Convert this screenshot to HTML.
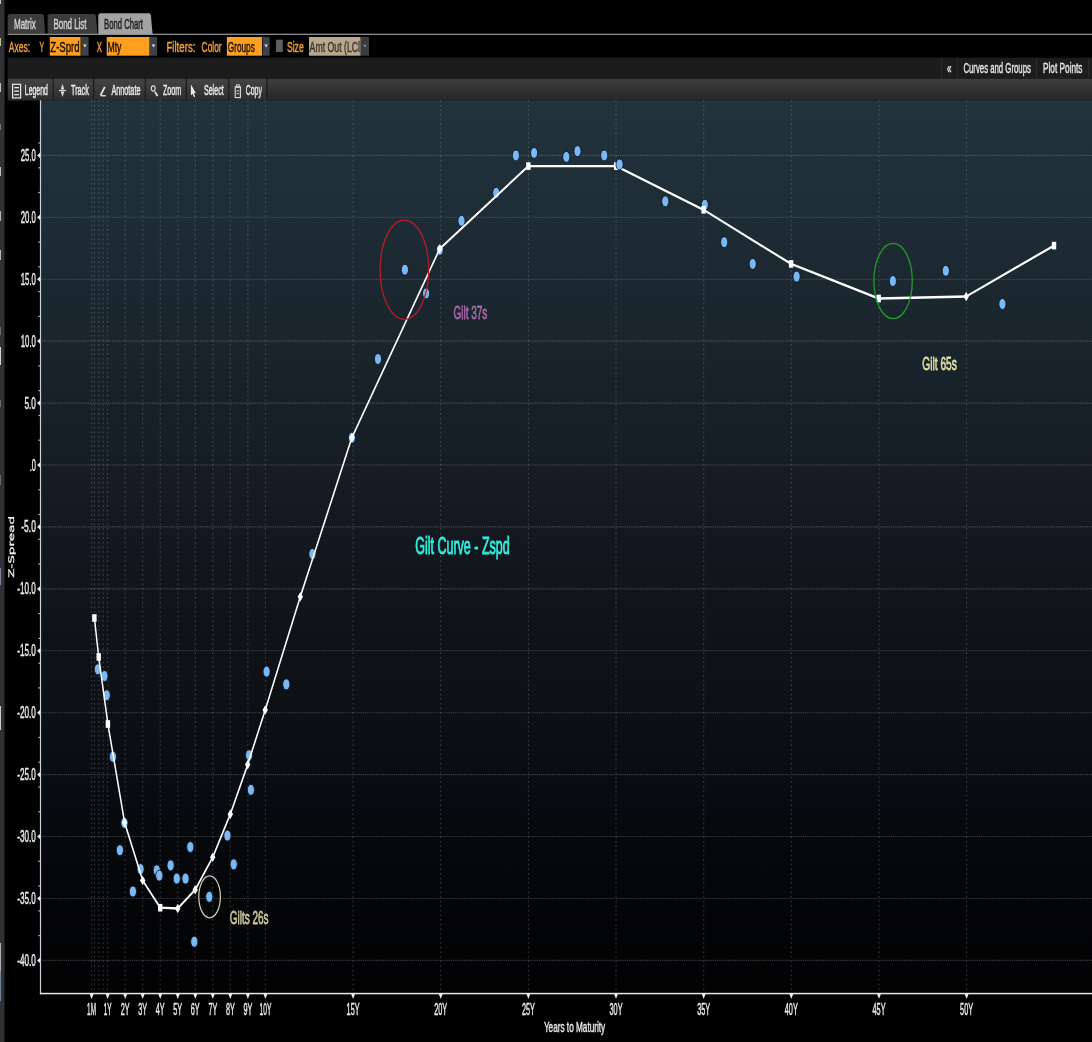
<!DOCTYPE html>
<html lang="en"><head><meta charset="utf-8"><title>Bond Chart</title>
<style>
html,body{margin:0;padding:0;background:#000;width:1092px;height:1042px;overflow:hidden;position:relative}
svg{display:block;position:absolute;left:-10px;top:-10px;font-family:"Liberation Sans",sans-serif;filter:blur(0.45px)}
.dv2{font-family:"DejaVu Sans",sans-serif}
</style></head><body>
<svg width="1112" height="1062" viewBox="-10 -10 1112 1062">
<defs>
<linearGradient id="plotbg" x1="0" y1="0" x2="0" y2="1">
<stop offset="0" stop-color="#22333d"/>
<stop offset="0.224" stop-color="#1b272f"/>
<stop offset="0.448" stop-color="#141a22"/>
<stop offset="0.672" stop-color="#0d1015"/>
<stop offset="0.784" stop-color="#080b0f"/>
<stop offset="0.896" stop-color="#040507"/>
<stop offset="1" stop-color="#020203"/>
</linearGradient>
<linearGradient id="tb" x1="0" y1="0" x2="0" y2="1">
<stop offset="0" stop-color="#3e3e3e"/><stop offset="1" stop-color="#262626"/>
</linearGradient>
</defs>
<rect x="-10" y="-10" width="1112" height="1062" fill="#000"/>

<rect x="-10" y="-10" width="14.5" height="1062" fill="#2f3134"/>
<rect x="-10" y="0" width="10.9" height="4" fill="#d8d8d8"/>
<rect x="-10" y="38" width="10.9" height="8" fill="#d8d0a8"/>
<rect x="-10" y="83" width="10.9" height="9" fill="#d0d0d0"/>
<rect x="-10" y="124" width="10.9" height="6" fill="#808080"/>
<rect x="-10" y="167" width="10.9" height="9" fill="#d0d0d0"/>
<rect x="-10" y="211" width="10.9" height="10" fill="#c8c8c8"/>
<rect x="-10" y="250" width="10.9" height="10" fill="#c8c8c8"/>
<rect x="-10" y="327" width="10.9" height="8" fill="#707070"/>
<rect x="-10" y="347" width="10.9" height="18" fill="#e8e8e8"/>
<rect x="-10" y="400" width="10.9" height="7" fill="#707070"/>
<rect x="-10" y="475" width="10.9" height="10" fill="#707070"/>
<rect x="-10" y="568" width="10.9" height="17" fill="#8890a8"/>
<rect x="-10" y="706" width="10.9" height="24" fill="#e0e0e0"/>
<rect x="-10" y="943" width="10.9" height="28" fill="#c0c0c0"/>
<rect x="-10" y="971" width="10.9" height="30" fill="#8090a8"/>
<polygon points="7.7,33.8 7.7,15.5 9.2,13.9 42.6,13.9 43.8,15.5 45.2,33.8" fill="#3d3d3d"/>
<polygon points="47.6,33.8 47.6,15.5 49.1,13.9 94.6,13.9 95.8,15.5 97.4,33.8" fill="#3d3d3d"/>
<polygon points="98.3,34.5 98.3,15 99.8,13.3 149.6,13.3 150.9,15 152.6,34.5" fill="#a2a2a2"/>
<rect x="7.7" y="33.7" width="1094.3" height="1.2" fill="#9a9a9a"/>
<text x="13.9" y="29.2" font-size="15" fill="#d4d4da" stroke="#d4d4da" stroke-width="0.45" text-anchor="start" textLength="22" lengthAdjust="spacingAndGlyphs">Matrix</text>
<text x="53.5" y="29.2" font-size="15" fill="#d4d4da" stroke="#d4d4da" stroke-width="0.45" text-anchor="start" textLength="33" lengthAdjust="spacingAndGlyphs">Bond List</text>
<text x="104" y="29.2" font-size="15" fill="#1c1c1c" stroke="#1c1c1c" stroke-width="0.45" text-anchor="start" textLength="39" lengthAdjust="spacingAndGlyphs">Bond Chart</text>
<text x="8.8" y="51.8" font-size="15.5" fill="#f3a032" stroke="#f3a032" stroke-width="0.45" text-anchor="start" textLength="21.2" lengthAdjust="spacingAndGlyphs">Axes:</text>
<text x="39.6" y="51.8" font-size="15.5" fill="#f3a032" stroke="#f3a032" stroke-width="0.45" text-anchor="start" textLength="4.6" lengthAdjust="spacingAndGlyphs">Y</text>
<rect x="49.8" y="37" width="30.8" height="18.7" fill="#ff9f1f"/>
<text x="50.3" y="51.8" font-size="15.5" fill="#1a1000" stroke="#1a1000" stroke-width="0.45" text-anchor="start" textLength="29.3" lengthAdjust="spacingAndGlyphs">Z-Sprd</text>
<rect x="81.2" y="37" width="7.4" height="18.7" fill="#3f4148"/>
<polygon points="83.2,44.6 86.6,44.6 84.9,47.6" fill="#e8e8e8"/>
<text x="96.7" y="51.8" font-size="15.5" fill="#f3a032" stroke="#f3a032" stroke-width="0.45" text-anchor="start" textLength="5.1" lengthAdjust="spacingAndGlyphs">X</text>
<rect x="106.7" y="37" width="42.8" height="18.7" fill="#ff9f1f"/>
<text x="107.4" y="51.8" font-size="15.5" fill="#1a1000" stroke="#1a1000" stroke-width="0.45" text-anchor="start" textLength="14" lengthAdjust="spacingAndGlyphs">Mty</text>
<rect x="150" y="37" width="7" height="18.7" fill="#3f4148"/>
<polygon points="151.8,44.6 155.2,44.6 153.5,47.6" fill="#e8e8e8"/>
<text x="166.4" y="51.8" font-size="15.5" fill="#f3a032" stroke="#f3a032" stroke-width="0.45" text-anchor="start" textLength="29" lengthAdjust="spacingAndGlyphs">Filters:</text>
<text x="201.6" y="51.8" font-size="15.5" fill="#f3a032" stroke="#f3a032" stroke-width="0.45" text-anchor="start" textLength="20" lengthAdjust="spacingAndGlyphs">Color</text>
<rect x="226.9" y="37" width="35.1" height="18.7" fill="#ff9f1f"/>
<text x="227.8" y="51.8" font-size="15.5" fill="#1a1000" stroke="#1a1000" stroke-width="0.45" text-anchor="start" textLength="27" lengthAdjust="spacingAndGlyphs">Groups</text>
<rect x="262.6" y="37" width="7" height="18.7" fill="#3f4148"/>
<polygon points="264.4,44.6 267.8,44.6 266.1,47.6" fill="#e8e8e8"/>
<rect x="276" y="39.7" width="6.8" height="12.3" fill="#5e5e5e"/>
<text x="286.9" y="51.8" font-size="15.5" fill="#f3a032" stroke="#f3a032" stroke-width="0.45" text-anchor="start" textLength="16.8" lengthAdjust="spacingAndGlyphs">Size</text>
<rect x="309" y="37" width="51.6" height="18.7" fill="#b9a88f"/>
<text x="309.6" y="51.8" font-size="15.5" fill="#3a342c" stroke="#3a342c" stroke-width="0.45" text-anchor="start" textLength="50.4" lengthAdjust="spacingAndGlyphs">Amt Out (LCl</text>
<rect x="361" y="37" width="8" height="18.7" fill="#3a3c42"/>
<polygon points="363.4,44.8 366.4,44.8 364.9,47.4" fill="#8890b0"/>
<rect x="7.7" y="57.7" width="1094.3" height="21.3" fill="#1c1c1c"/>
<rect x="941" y="58" width="1" height="20" fill="#2a2a2a"/>
<rect x="956.7" y="58" width="1" height="20" fill="#2a2a2a"/>
<rect x="1036" y="58" width="1" height="20" fill="#2a2a2a"/>
<rect x="1088" y="58" width="1" height="20" fill="#2a2a2a"/>
<text x="947" y="73" font-size="15" fill="#e4e4e4" stroke="#e4e4e4" stroke-width="0.45" text-anchor="start" textLength="4.5" lengthAdjust="spacingAndGlyphs">«</text>
<text x="963.4" y="73" font-size="15" fill="#e4e4e4" stroke="#e4e4e4" stroke-width="0.45" text-anchor="start" textLength="67.5" lengthAdjust="spacingAndGlyphs">Curves and Groups</text>
<text x="1043" y="73" font-size="15" fill="#e4e4e4" stroke="#e4e4e4" stroke-width="0.45" text-anchor="start" textLength="39.5" lengthAdjust="spacingAndGlyphs">Plot Points</text>
<rect x="7.7" y="78.9" width="1094.3" height="21.6" fill="url(#tb)"/>
<rect x="7.7" y="78.9" width="258.6" height="21.6" fill="#ffffff" fill-opacity="0.03"/>
<rect x="52.6" y="78.9" width="1.2" height="21.6" fill="#1c1c1c"/>
<rect x="93" y="78.9" width="1.2" height="21.6" fill="#1c1c1c"/>
<rect x="144.7" y="78.9" width="1.2" height="21.6" fill="#1c1c1c"/>
<rect x="185.7" y="78.9" width="1.2" height="21.6" fill="#1c1c1c"/>
<rect x="228.2" y="78.9" width="1.2" height="21.6" fill="#1c1c1c"/>
<rect x="266.3" y="78.9" width="1.2" height="21.6" fill="#1c1c1c"/>
<rect x="12.6" y="84.3" width="8" height="13.6" fill="none" stroke="#e8e8e8" stroke-width="1.2"/>
<rect x="14.2" y="87.0" width="4.8" height="1.3" fill="#e8e8e8"/>
<rect x="14.2" y="90.5" width="4.8" height="1.3" fill="#e8e8e8"/>
<rect x="14.2" y="94.0" width="4.8" height="1.3" fill="#e8e8e8"/>
<text x="24.8" y="94.8" font-size="15" fill="#ececec" stroke="#ececec" stroke-width="0.45" text-anchor="start" textLength="23" lengthAdjust="spacingAndGlyphs">Legend</text>
<path d="M62.5 83.8 L64.3 89.6 L60.7 89.6 Z M62.5 97 L64.3 91.4 L60.7 91.4 Z" fill="#dcdcdc"/><rect x="59" y="90" width="7" height="1.1" fill="#dcdcdc"/>
<text x="71" y="94.8" font-size="15" fill="#ececec" stroke="#ececec" stroke-width="0.45" text-anchor="start" textLength="17.8" lengthAdjust="spacingAndGlyphs">Track</text>
<path d="M100.5 95.4 L104.8 87" stroke="#e8e8e8" stroke-width="1.7" fill="none"/><rect x="100.6" y="95.1" width="5.2" height="1.3" fill="#e8e8e8"/>
<text x="111.5" y="94.8" font-size="15" fill="#ececec" stroke="#ececec" stroke-width="0.45" text-anchor="start" textLength="28.9" lengthAdjust="spacingAndGlyphs">Annotate</text>
<ellipse cx="153.2" cy="88.5" rx="1.9" ry="2.6" fill="none" stroke="#dcdcdc" stroke-width="1.1"/><path d="M154.9 91.6 L157.5 96" stroke="#e4e4e4" stroke-width="1.7"/>
<text x="163" y="94.8" font-size="15" fill="#ececec" stroke="#ececec" stroke-width="0.45" text-anchor="start" textLength="18.3" lengthAdjust="spacingAndGlyphs">Zoom</text>
<path d="M190.9 84.6 L190.9 95.6 L192.6 93.8 L194 97.2 L195.2 96.6 L193.8 93.3 L195.8 93 Z" fill="#f0f0f0"/>
<text x="203.9" y="94.8" font-size="15" fill="#ececec" stroke="#ececec" stroke-width="0.45" text-anchor="start" textLength="19.8" lengthAdjust="spacingAndGlyphs">Select</text>
<rect x="235.2" y="86.8" width="5.2" height="10.8" fill="none" stroke="#e0e0e0" stroke-width="1.1"/><rect x="236.6" y="84.8" width="2.6" height="2.6" fill="none" stroke="#e0e0e0" stroke-width="0.9"/><rect x="236.6" y="90.4" width="2.6" height="1" fill="#e0e0e0"/><rect x="236.6" y="93.2" width="2.6" height="1" fill="#e0e0e0"/>
<text x="245.7" y="94.8" font-size="15" fill="#ececec" stroke="#ececec" stroke-width="0.45" text-anchor="start" textLength="16.2" lengthAdjust="spacingAndGlyphs">Copy</text>
<rect x="40.6" y="100.3" width="1061.4" height="893.2" fill="url(#plotbg)"/>
<g stroke="#aab4bc" stroke-opacity="0.3" stroke-width="1.1" stroke-dasharray="1.3 0.9" fill="none">
<path d="M41.6 960.4 H1102"/>
<path d="M41.6 898.5 H1102"/>
<path d="M41.6 836.5 H1102"/>
<path d="M41.6 774.6 H1102"/>
<path d="M41.6 712.7 H1102"/>
<path d="M41.6 650.8 H1102"/>
<path d="M41.6 588.9 H1102"/>
<path d="M41.6 526.9 H1102"/>
<path d="M41.6 465.0 H1102"/>
<path d="M41.6 403.1 H1102"/>
<path d="M41.6 341.1 H1102"/>
<path d="M41.6 279.2 H1102"/>
<path d="M41.6 217.3 H1102"/>
<path d="M41.6 155.4 H1102"/>
</g>
<g stroke="#aab4bc" stroke-opacity="0.27" stroke-width="1.1" stroke-dasharray="1.7 2.9" fill="none">
<path d="M91.6 100.3 V993.5"/>
<path d="M94.5 100.3 V993.5"/>
<path d="M98.9 100.3 V993.5"/>
<path d="M103.2 100.3 V993.5"/>
<path d="M107.6 100.3 V993.5"/>
<path d="M125.2 100.3 V993.5"/>
<path d="M142.7 100.3 V993.5"/>
<path d="M160.2 100.3 V993.5"/>
<path d="M177.8 100.3 V993.5"/>
<path d="M195.3 100.3 V993.5"/>
<path d="M212.8 100.3 V993.5"/>
<path d="M230.3 100.3 V993.5"/>
<path d="M247.9 100.3 V993.5"/>
<path d="M265.4 100.3 V993.5"/>
<path d="M353.1 100.3 V993.5"/>
<path d="M440.7 100.3 V993.5"/>
<path d="M528.4 100.3 V993.5"/>
<path d="M616.0 100.3 V993.5"/>
<path d="M703.7 100.3 V993.5"/>
<path d="M791.3 100.3 V993.5"/>
<path d="M879.0 100.3 V993.5"/>
<path d="M966.6 100.3 V993.5"/>
</g>
<rect x="39.9" y="100.3" width="1.2" height="894.0" fill="#ccd0d8"/>
<rect x="39.9" y="992.8" width="1062.1000000000001" height="1.5" fill="#e6e6e6"/>
<rect x="38.4" y="959.8" width="2" height="1.2" fill="#b8b8b8"/>
<rect x="38.4" y="935.0" width="2" height="1.2" fill="#b8b8b8"/>
<rect x="38.4" y="910.3" width="2" height="1.2" fill="#b8b8b8"/>
<rect x="38.4" y="885.5" width="2" height="1.2" fill="#b8b8b8"/>
<rect x="38.4" y="860.7" width="2" height="1.2" fill="#b8b8b8"/>
<rect x="38.4" y="835.9" width="2" height="1.2" fill="#b8b8b8"/>
<rect x="38.4" y="811.2" width="2" height="1.2" fill="#b8b8b8"/>
<rect x="38.4" y="786.4" width="2" height="1.2" fill="#b8b8b8"/>
<rect x="38.4" y="761.6" width="2" height="1.2" fill="#b8b8b8"/>
<rect x="38.4" y="736.9" width="2" height="1.2" fill="#b8b8b8"/>
<rect x="38.4" y="712.1" width="2" height="1.2" fill="#b8b8b8"/>
<rect x="38.4" y="687.3" width="2" height="1.2" fill="#b8b8b8"/>
<rect x="38.4" y="662.6" width="2" height="1.2" fill="#b8b8b8"/>
<rect x="38.4" y="637.8" width="2" height="1.2" fill="#b8b8b8"/>
<rect x="38.4" y="613.0" width="2" height="1.2" fill="#b8b8b8"/>
<rect x="38.4" y="588.2" width="2" height="1.2" fill="#b8b8b8"/>
<rect x="38.4" y="563.5" width="2" height="1.2" fill="#b8b8b8"/>
<rect x="38.4" y="538.7" width="2" height="1.2" fill="#b8b8b8"/>
<rect x="38.4" y="513.9" width="2" height="1.2" fill="#b8b8b8"/>
<rect x="38.4" y="489.2" width="2" height="1.2" fill="#b8b8b8"/>
<rect x="38.4" y="464.4" width="2" height="1.2" fill="#b8b8b8"/>
<rect x="38.4" y="439.6" width="2" height="1.2" fill="#b8b8b8"/>
<rect x="38.4" y="414.9" width="2" height="1.2" fill="#b8b8b8"/>
<rect x="38.4" y="390.1" width="2" height="1.2" fill="#b8b8b8"/>
<rect x="38.4" y="365.3" width="2" height="1.2" fill="#b8b8b8"/>
<rect x="38.4" y="340.5" width="2" height="1.2" fill="#b8b8b8"/>
<rect x="38.4" y="315.8" width="2" height="1.2" fill="#b8b8b8"/>
<rect x="38.4" y="291.0" width="2" height="1.2" fill="#b8b8b8"/>
<rect x="38.4" y="266.2" width="2" height="1.2" fill="#b8b8b8"/>
<rect x="38.4" y="241.5" width="2" height="1.2" fill="#b8b8b8"/>
<rect x="38.4" y="216.7" width="2" height="1.2" fill="#b8b8b8"/>
<rect x="38.4" y="191.9" width="2" height="1.2" fill="#b8b8b8"/>
<rect x="38.4" y="167.2" width="2" height="1.2" fill="#b8b8b8"/>
<rect x="38.4" y="142.4" width="2" height="1.2" fill="#b8b8b8"/>
<polygon points="40.0,152.8 40.0,158.0 37.0,155.4" fill="#e8e8e8"/>
<text x="20.7" y="160.9" font-size="16.5" fill="#ececec" stroke="#ececec" stroke-width="0.45" text-anchor="start" textLength="15.2" lengthAdjust="spacingAndGlyphs">25.0</text>
<polygon points="40.0,214.7 40.0,219.9 37.0,217.3" fill="#e8e8e8"/>
<text x="20.7" y="222.8" font-size="16.5" fill="#ececec" stroke="#ececec" stroke-width="0.45" text-anchor="start" textLength="15.2" lengthAdjust="spacingAndGlyphs">20.0</text>
<polygon points="40.0,276.6 40.0,281.8 37.0,279.2" fill="#e8e8e8"/>
<text x="20.7" y="284.7" font-size="16.5" fill="#ececec" stroke="#ececec" stroke-width="0.45" text-anchor="start" textLength="15.2" lengthAdjust="spacingAndGlyphs">15.0</text>
<polygon points="40.0,338.5 40.0,343.8 37.0,341.1" fill="#e8e8e8"/>
<text x="20.7" y="346.6" font-size="16.5" fill="#ececec" stroke="#ececec" stroke-width="0.45" text-anchor="start" textLength="15.2" lengthAdjust="spacingAndGlyphs">10.0</text>
<polygon points="40.0,400.5 40.0,405.7 37.0,403.1" fill="#e8e8e8"/>
<text x="24.5" y="408.6" font-size="16.5" fill="#ececec" stroke="#ececec" stroke-width="0.45" text-anchor="start" textLength="11.4" lengthAdjust="spacingAndGlyphs">5.0</text>
<polygon points="40.0,462.4 40.0,467.6 37.0,465.0" fill="#e8e8e8"/>
<text x="29.7" y="470.5" font-size="16.5" fill="#ececec" stroke="#ececec" stroke-width="0.45" text-anchor="start" textLength="6.2" lengthAdjust="spacingAndGlyphs">.0</text>
<polygon points="40.0,524.3 40.0,529.5 37.0,526.9" fill="#e8e8e8"/>
<text x="21.3" y="532.4" font-size="16.5" fill="#ececec" stroke="#ececec" stroke-width="0.45" text-anchor="start" textLength="14.6" lengthAdjust="spacingAndGlyphs">-5.0</text>
<polygon points="40.0,586.2 40.0,591.5 37.0,588.9" fill="#e8e8e8"/>
<text x="17.3" y="594.4" font-size="16.5" fill="#ececec" stroke="#ececec" stroke-width="0.45" text-anchor="start" textLength="18.6" lengthAdjust="spacingAndGlyphs">-10.0</text>
<polygon points="40.0,648.2 40.0,653.4 37.0,650.8" fill="#e8e8e8"/>
<text x="17.3" y="656.3" font-size="16.5" fill="#ececec" stroke="#ececec" stroke-width="0.45" text-anchor="start" textLength="18.6" lengthAdjust="spacingAndGlyphs">-15.0</text>
<polygon points="40.0,710.1 40.0,715.3 37.0,712.7" fill="#e8e8e8"/>
<text x="17.3" y="718.2" font-size="16.5" fill="#ececec" stroke="#ececec" stroke-width="0.45" text-anchor="start" textLength="18.6" lengthAdjust="spacingAndGlyphs">-20.0</text>
<polygon points="40.0,772.0 40.0,777.2 37.0,774.6" fill="#e8e8e8"/>
<text x="17.3" y="780.1" font-size="16.5" fill="#ececec" stroke="#ececec" stroke-width="0.45" text-anchor="start" textLength="18.6" lengthAdjust="spacingAndGlyphs">-25.0</text>
<polygon points="40.0,833.9 40.0,839.1 37.0,836.5" fill="#e8e8e8"/>
<text x="17.3" y="842.0" font-size="16.5" fill="#ececec" stroke="#ececec" stroke-width="0.45" text-anchor="start" textLength="18.6" lengthAdjust="spacingAndGlyphs">-30.0</text>
<polygon points="40.0,895.9 40.0,901.1 37.0,898.5" fill="#e8e8e8"/>
<text x="17.3" y="904.0" font-size="16.5" fill="#ececec" stroke="#ececec" stroke-width="0.45" text-anchor="start" textLength="18.6" lengthAdjust="spacingAndGlyphs">-35.0</text>
<polygon points="40.0,957.8 40.0,963.0 37.0,960.4" fill="#e8e8e8"/>
<text x="17.3" y="965.9" font-size="16.5" fill="#ececec" stroke="#ececec" stroke-width="0.45" text-anchor="start" textLength="18.6" lengthAdjust="spacingAndGlyphs">-40.0</text>
<polygon points="89.7,994.1 93.5,994.1 91.6,999.1" fill="#f0f0f0"/>
<text x="87.1" y="1014.8" font-size="16.5" fill="#ececec" stroke="#ececec" stroke-width="0.45" text-anchor="start" textLength="8.9" lengthAdjust="spacingAndGlyphs">1M</text>
<polygon points="105.7,994.1 109.5,994.1 107.6,999.1" fill="#f0f0f0"/>
<text x="103.7" y="1014.8" font-size="16.5" fill="#ececec" stroke="#ececec" stroke-width="0.45" text-anchor="start" textLength="7.8" lengthAdjust="spacingAndGlyphs">1Y</text>
<polygon points="123.3,994.1 127.1,994.1 125.2,999.1" fill="#f0f0f0"/>
<text x="120.7" y="1014.8" font-size="16.5" fill="#ececec" stroke="#ececec" stroke-width="0.45" text-anchor="start" textLength="8.9" lengthAdjust="spacingAndGlyphs">2Y</text>
<polygon points="140.8,994.1 144.6,994.1 142.7,999.1" fill="#f0f0f0"/>
<text x="138.2" y="1014.8" font-size="16.5" fill="#ececec" stroke="#ececec" stroke-width="0.45" text-anchor="start" textLength="8.9" lengthAdjust="spacingAndGlyphs">3Y</text>
<polygon points="158.3,994.1 162.1,994.1 160.2,999.1" fill="#f0f0f0"/>
<text x="155.8" y="1014.8" font-size="16.5" fill="#ececec" stroke="#ececec" stroke-width="0.45" text-anchor="start" textLength="8.9" lengthAdjust="spacingAndGlyphs">4Y</text>
<polygon points="175.8,994.1 179.7,994.1 177.8,999.1" fill="#f0f0f0"/>
<text x="173.3" y="1014.8" font-size="16.5" fill="#ececec" stroke="#ececec" stroke-width="0.45" text-anchor="start" textLength="8.9" lengthAdjust="spacingAndGlyphs">5Y</text>
<polygon points="193.4,994.1 197.2,994.1 195.3,999.1" fill="#f0f0f0"/>
<text x="190.8" y="1014.8" font-size="16.5" fill="#ececec" stroke="#ececec" stroke-width="0.45" text-anchor="start" textLength="8.9" lengthAdjust="spacingAndGlyphs">6Y</text>
<polygon points="210.9,994.1 214.7,994.1 212.8,999.1" fill="#f0f0f0"/>
<text x="208.4" y="1014.8" font-size="16.5" fill="#ececec" stroke="#ececec" stroke-width="0.45" text-anchor="start" textLength="8.9" lengthAdjust="spacingAndGlyphs">7Y</text>
<polygon points="228.4,994.1 232.2,994.1 230.3,999.1" fill="#f0f0f0"/>
<text x="225.9" y="1014.8" font-size="16.5" fill="#ececec" stroke="#ececec" stroke-width="0.45" text-anchor="start" textLength="8.9" lengthAdjust="spacingAndGlyphs">8Y</text>
<polygon points="246.0,994.1 249.8,994.1 247.9,999.1" fill="#f0f0f0"/>
<text x="243.4" y="1014.8" font-size="16.5" fill="#ececec" stroke="#ececec" stroke-width="0.45" text-anchor="start" textLength="8.9" lengthAdjust="spacingAndGlyphs">9Y</text>
<polygon points="263.5,994.1 267.3,994.1 265.4,999.1" fill="#f0f0f0"/>
<text x="259.5" y="1014.8" font-size="16.5" fill="#ececec" stroke="#ececec" stroke-width="0.45" text-anchor="start" textLength="11.8" lengthAdjust="spacingAndGlyphs">10Y</text>
<polygon points="351.2,994.1 355.0,994.1 353.1,999.1" fill="#f0f0f0"/>
<text x="346.6" y="1014.8" font-size="16.5" fill="#ececec" stroke="#ececec" stroke-width="0.45" text-anchor="start" textLength="13" lengthAdjust="spacingAndGlyphs">15Y</text>
<polygon points="438.8,994.1 442.6,994.1 440.7,999.1" fill="#f0f0f0"/>
<text x="434.2" y="1014.8" font-size="16.5" fill="#ececec" stroke="#ececec" stroke-width="0.45" text-anchor="start" textLength="13" lengthAdjust="spacingAndGlyphs">20Y</text>
<polygon points="526.5,994.1 530.2,994.1 528.4,999.1" fill="#f0f0f0"/>
<text x="521.9" y="1014.8" font-size="16.5" fill="#ececec" stroke="#ececec" stroke-width="0.45" text-anchor="start" textLength="13" lengthAdjust="spacingAndGlyphs">25Y</text>
<polygon points="614.1,994.1 617.9,994.1 616.0,999.1" fill="#f0f0f0"/>
<text x="609.5" y="1014.8" font-size="16.5" fill="#ececec" stroke="#ececec" stroke-width="0.45" text-anchor="start" textLength="13" lengthAdjust="spacingAndGlyphs">30Y</text>
<polygon points="701.8,994.1 705.6,994.1 703.7,999.1" fill="#f0f0f0"/>
<text x="697.2" y="1014.8" font-size="16.5" fill="#ececec" stroke="#ececec" stroke-width="0.45" text-anchor="start" textLength="13" lengthAdjust="spacingAndGlyphs">35Y</text>
<polygon points="789.4,994.1 793.2,994.1 791.3,999.1" fill="#f0f0f0"/>
<text x="784.8" y="1014.8" font-size="16.5" fill="#ececec" stroke="#ececec" stroke-width="0.45" text-anchor="start" textLength="13" lengthAdjust="spacingAndGlyphs">40Y</text>
<polygon points="877.1,994.1 880.9,994.1 879.0,999.1" fill="#f0f0f0"/>
<text x="872.5" y="1014.8" font-size="16.5" fill="#ececec" stroke="#ececec" stroke-width="0.45" text-anchor="start" textLength="13" lengthAdjust="spacingAndGlyphs">45Y</text>
<polygon points="964.7,994.1 968.5,994.1 966.6,999.1" fill="#f0f0f0"/>
<text x="960.1" y="1014.8" font-size="16.5" fill="#ececec" stroke="#ececec" stroke-width="0.45" text-anchor="start" textLength="13" lengthAdjust="spacingAndGlyphs">50Y</text>
<text x="543.9" y="1032.4" font-size="14.6" fill="#e6e6e6" stroke="#e6e6e6" stroke-width="0.45" text-anchor="start" textLength="61.3" lengthAdjust="spacingAndGlyphs">Years to Maturity</text>
<text class="dv2" transform="translate(14.3,577.8) rotate(-90)" font-size="7.6" fill="#f0f0f0" stroke="#f0f0f0" stroke-width="0.25" textLength="62" lengthAdjust="spacingAndGlyphs">Z-Spread</text>
<ellipse cx="97.9" cy="669.3" rx="3.6" ry="5.5" fill="#7ab8f4" stroke="#0a1424" stroke-width="0.9"/>
<ellipse cx="104.4" cy="676" rx="3.6" ry="5.5" fill="#7ab8f4" stroke="#0a1424" stroke-width="0.9"/>
<ellipse cx="106.7" cy="695.3" rx="3.6" ry="5.5" fill="#7ab8f4" stroke="#0a1424" stroke-width="0.9"/>
<ellipse cx="112.9" cy="756.7" rx="3.6" ry="5.5" fill="#7ab8f4" stroke="#0a1424" stroke-width="0.9"/>
<ellipse cx="124.4" cy="822.9" rx="3.6" ry="5.5" fill="#7ab8f4" stroke="#0a1424" stroke-width="0.9"/>
<ellipse cx="119.9" cy="850.2" rx="3.6" ry="5.5" fill="#7ab8f4" stroke="#0a1424" stroke-width="0.9"/>
<ellipse cx="132.9" cy="891.5" rx="3.6" ry="5.5" fill="#7ab8f4" stroke="#0a1424" stroke-width="0.9"/>
<ellipse cx="140.6" cy="869.1" rx="3.6" ry="5.5" fill="#7ab8f4" stroke="#0a1424" stroke-width="0.9"/>
<ellipse cx="156.8" cy="870.3" rx="3.6" ry="5.5" fill="#7ab8f4" stroke="#0a1424" stroke-width="0.9"/>
<ellipse cx="159.3" cy="875.6" rx="3.6" ry="5.5" fill="#7ab8f4" stroke="#0a1424" stroke-width="0.9"/>
<ellipse cx="170.6" cy="865.3" rx="3.6" ry="5.5" fill="#7ab8f4" stroke="#0a1424" stroke-width="0.9"/>
<ellipse cx="176.8" cy="878.6" rx="3.6" ry="5.5" fill="#7ab8f4" stroke="#0a1424" stroke-width="0.9"/>
<ellipse cx="185.5" cy="878.6" rx="3.6" ry="5.5" fill="#7ab8f4" stroke="#0a1424" stroke-width="0.9"/>
<ellipse cx="190.3" cy="847" rx="3.6" ry="5.5" fill="#7ab8f4" stroke="#0a1424" stroke-width="0.9"/>
<ellipse cx="194.3" cy="941.7" rx="3.6" ry="5.5" fill="#7ab8f4" stroke="#0a1424" stroke-width="0.9"/>
<ellipse cx="209.3" cy="896.8" rx="3.6" ry="5.5" fill="#7ab8f4" stroke="#0a1424" stroke-width="0.9"/>
<ellipse cx="227.4" cy="835.6" rx="3.6" ry="5.5" fill="#7ab8f4" stroke="#0a1424" stroke-width="0.9"/>
<ellipse cx="233.7" cy="864.3" rx="3.6" ry="5.5" fill="#7ab8f4" stroke="#0a1424" stroke-width="0.9"/>
<ellipse cx="249.1" cy="755.2" rx="3.6" ry="5.5" fill="#7ab8f4" stroke="#0a1424" stroke-width="0.9"/>
<ellipse cx="250.9" cy="789.8" rx="3.6" ry="5.5" fill="#7ab8f4" stroke="#0a1424" stroke-width="0.9"/>
<ellipse cx="266.6" cy="671.6" rx="3.6" ry="5.5" fill="#7ab8f4" stroke="#0a1424" stroke-width="0.9"/>
<ellipse cx="286.3" cy="684.3" rx="3.6" ry="5.5" fill="#7ab8f4" stroke="#0a1424" stroke-width="0.9"/>
<ellipse cx="312.4" cy="554" rx="3.6" ry="5.5" fill="#7ab8f4" stroke="#0a1424" stroke-width="0.9"/>
<ellipse cx="351.9" cy="437.8" rx="3.6" ry="5.5" fill="#7ab8f4" stroke="#0a1424" stroke-width="0.9"/>
<ellipse cx="378" cy="359" rx="3.6" ry="5.5" fill="#7ab8f4" stroke="#0a1424" stroke-width="0.9"/>
<ellipse cx="404.9" cy="269.7" rx="3.6" ry="5.5" fill="#7ab8f4" stroke="#0a1424" stroke-width="0.9"/>
<ellipse cx="426.1" cy="293.4" rx="3.6" ry="5.5" fill="#7ab8f4" stroke="#0a1424" stroke-width="0.9"/>
<ellipse cx="439.8" cy="249.9" rx="3.6" ry="5.5" fill="#7ab8f4" stroke="#0a1424" stroke-width="0.9"/>
<ellipse cx="461.5" cy="220.8" rx="3.6" ry="5.5" fill="#7ab8f4" stroke="#0a1424" stroke-width="0.9"/>
<ellipse cx="496.2" cy="192.8" rx="3.6" ry="5.5" fill="#7ab8f4" stroke="#0a1424" stroke-width="0.9"/>
<ellipse cx="515.9" cy="155.4" rx="3.6" ry="5.5" fill="#7ab8f4" stroke="#0a1424" stroke-width="0.9"/>
<ellipse cx="534.1" cy="152.9" rx="3.6" ry="5.5" fill="#7ab8f4" stroke="#0a1424" stroke-width="0.9"/>
<ellipse cx="566.3" cy="156.9" rx="3.6" ry="5.5" fill="#7ab8f4" stroke="#0a1424" stroke-width="0.9"/>
<ellipse cx="577.5" cy="151.1" rx="3.6" ry="5.5" fill="#7ab8f4" stroke="#0a1424" stroke-width="0.9"/>
<ellipse cx="604.2" cy="155.4" rx="3.6" ry="5.5" fill="#7ab8f4" stroke="#0a1424" stroke-width="0.9"/>
<ellipse cx="619.2" cy="164.4" rx="3.6" ry="5.5" fill="#7ab8f4" stroke="#0a1424" stroke-width="0.9"/>
<ellipse cx="665.3" cy="201.3" rx="3.6" ry="5.5" fill="#7ab8f4" stroke="#0a1424" stroke-width="0.9"/>
<ellipse cx="704.8" cy="204.8" rx="3.6" ry="5.5" fill="#7ab8f4" stroke="#0a1424" stroke-width="0.9"/>
<ellipse cx="724.2" cy="242.2" rx="3.6" ry="5.5" fill="#7ab8f4" stroke="#0a1424" stroke-width="0.9"/>
<ellipse cx="752.7" cy="263.9" rx="3.6" ry="5.5" fill="#7ab8f4" stroke="#0a1424" stroke-width="0.9"/>
<ellipse cx="796.6" cy="276.6" rx="3.6" ry="5.5" fill="#7ab8f4" stroke="#0a1424" stroke-width="0.9"/>
<ellipse cx="892.9" cy="281" rx="3.6" ry="5.5" fill="#7ab8f4" stroke="#0a1424" stroke-width="0.9"/>
<ellipse cx="945.8" cy="270.8" rx="3.6" ry="5.5" fill="#7ab8f4" stroke="#0a1424" stroke-width="0.9"/>
<ellipse cx="1002.4" cy="304" rx="3.6" ry="5.5" fill="#7ab8f4" stroke="#0a1424" stroke-width="0.9"/>
<g transform="scale(1,1.55)"><polyline fill="none" stroke="#ffffff" stroke-width="1.5" stroke-linejoin="round" points="94.4,398.71 98.7,423.81 107.9,467.10 124.6,530.65 142.7,568.06 160.2,585.61 177.7,586.13 195.2,574.06 212.7,553.10 230.3,525.29 247.7,493.29 265.2,458.06 300.3,385.03 351.9,282.32 439.8,160.45 528.4,107.16 616.2,107.16 703.6,135.35 791.1,170.26 878.7,192.58 966.2,191.29 1054,158.45"/></g>
<g fill="#ffffff">
<rect x="92.2" y="614.2" width="4.4" height="7.6"/>
<rect x="96.5" y="653.1" width="4.4" height="7.6"/>
<rect x="105.7" y="720.2" width="4.4" height="7.6"/>
<polygon points="124.6,817.7 127.3,822.5 124.6,827.3 121.9,822.5"/>
<polygon points="142.7,875.7 145.4,880.5 142.7,885.3 140.0,880.5"/>
<rect x="158.0" y="903.9" width="4.4" height="7.6"/>
<polygon points="177.7,903.7 180.4,908.5 177.7,913.3 175.0,908.5"/>
<polygon points="195.2,885.0 197.9,889.8 195.2,894.6 192.5,889.8"/>
<polygon points="212.7,852.5 215.4,857.3 212.7,862.1 210.0,857.3"/>
<polygon points="230.3,809.4 233.0,814.2 230.3,819.0 227.6,814.2"/>
<polygon points="247.7,759.8 250.4,764.6 247.7,769.4 245.0,764.6"/>
<polygon points="265.2,705.2 267.9,710 265.2,714.8 262.5,710"/>
<polygon points="300.3,592.0 303.0,596.8 300.3,601.6 297.6,596.8"/>
<polygon points="351.9,432.8 354.6,437.6 351.9,442.4 349.2,437.6"/>
<polygon points="439.8,243.9 442.5,248.7 439.8,253.5 437.1,248.7"/>
<rect x="526.2" y="162.3" width="4.4" height="7.6"/>
<rect x="614.0" y="162.3" width="4.4" height="7.6"/>
<rect x="701.4" y="206.0" width="4.4" height="7.6"/>
<rect x="788.9" y="260.1" width="4.4" height="7.6"/>
<rect x="876.5" y="294.7" width="4.4" height="7.6"/>
<polygon points="966.2,291.7 968.9,296.5 966.2,301.3 963.5,296.5"/>
<rect x="1051.8" y="241.8" width="4.4" height="7.6"/>
</g>
<ellipse cx="619.6" cy="164.4" rx="3.6" ry="5.5" fill="#7ab8f4" stroke="#0a1424" stroke-width="0.9"/>
<ellipse cx="404.4" cy="269.7" rx="24.3" ry="49.6" fill="none" stroke="#b31d28" stroke-width="1.3"/>
<ellipse cx="893.1" cy="281" rx="19.2" ry="37.6" fill="none" stroke="#22992a" stroke-width="1.3"/>
<ellipse cx="209.6" cy="896.8" rx="10.8" ry="21" fill="none" stroke="#d2cdb4" stroke-width="1.2"/>
<text x="453.5" y="318.5" font-size="19" fill="#a765a8" stroke="#a765a8" stroke-width="0.8" text-anchor="start" textLength="33.8" lengthAdjust="spacingAndGlyphs">Gilt 37s</text>
<text x="922.3" y="369.8" font-size="18.2" fill="#dcdca4" stroke="#dcdca4" stroke-width="0.8" text-anchor="start" textLength="34.6" lengthAdjust="spacingAndGlyphs">Gilt 65s</text>
<text x="229.7" y="923.7" font-size="17.5" fill="#c4c096" stroke="#c4c096" stroke-width="0.8" text-anchor="start" textLength="38.8" lengthAdjust="spacingAndGlyphs">Gilts 26s</text>
<text x="415.2" y="553.7" font-size="23" fill="#2ff0e0" stroke="#2ff0e0" stroke-width="0.9" text-anchor="start" textLength="94.6" lengthAdjust="spacingAndGlyphs">Gilt Curve - Zspd</text>
</svg></body></html>
